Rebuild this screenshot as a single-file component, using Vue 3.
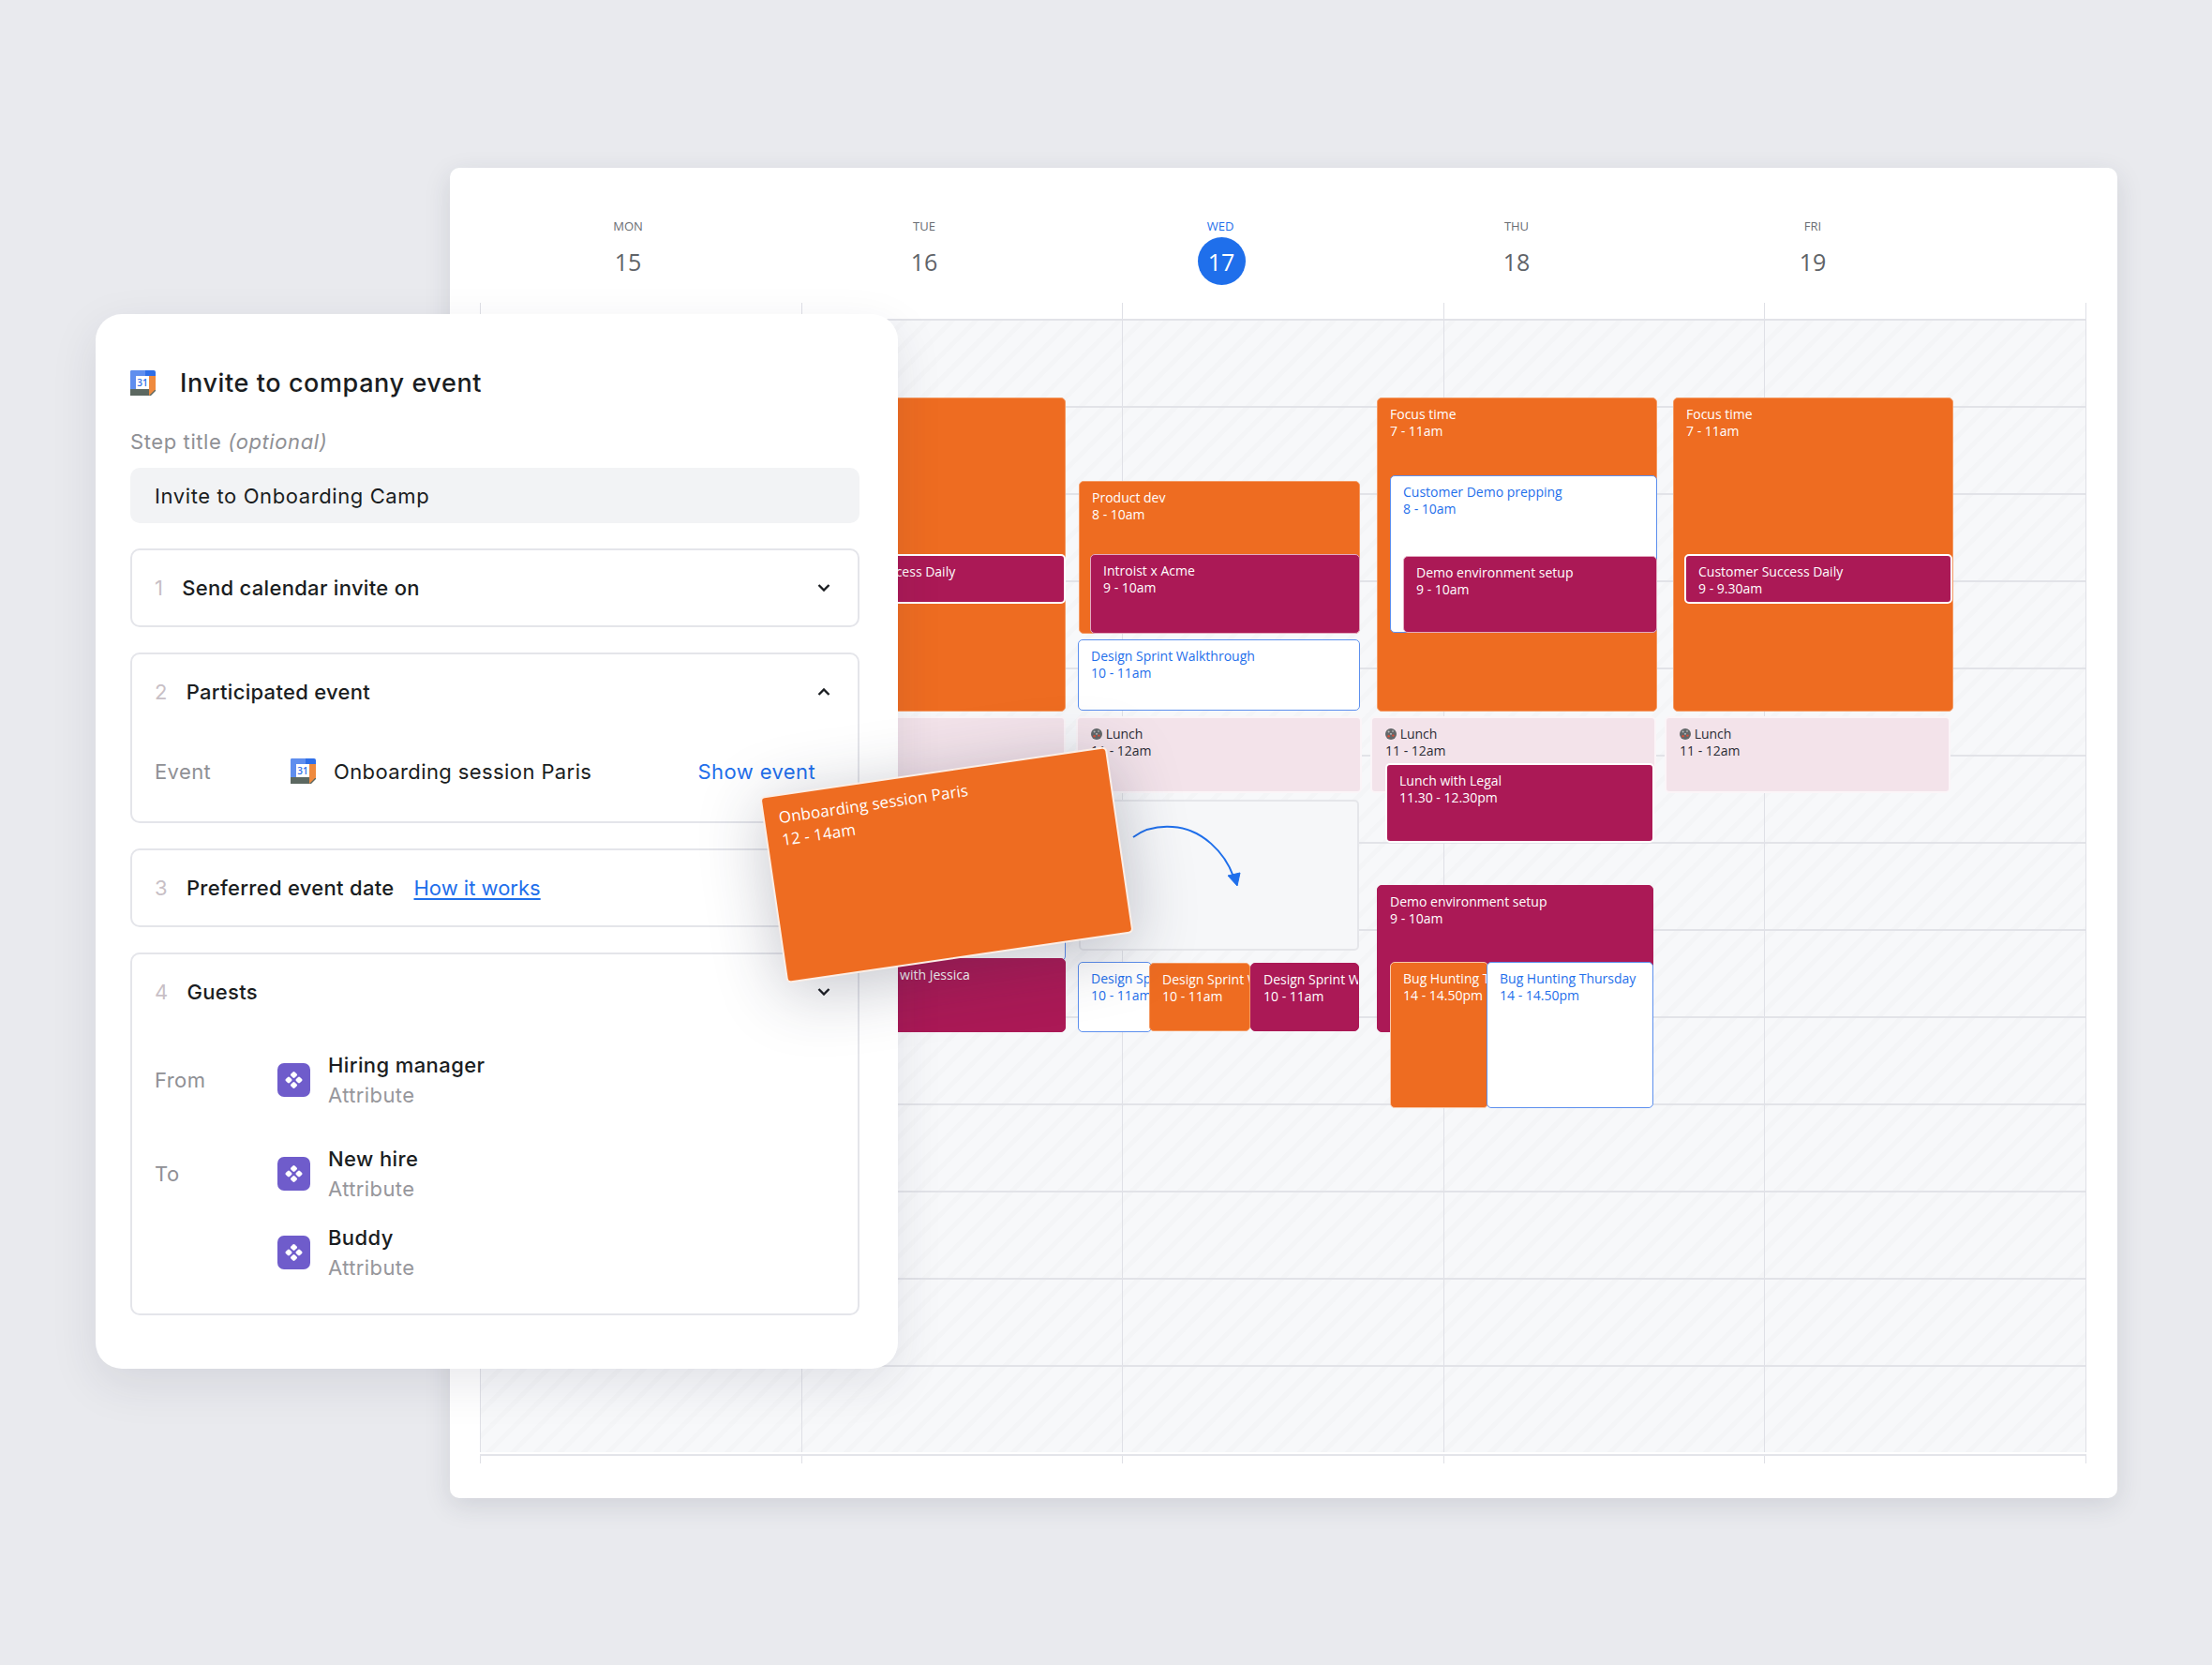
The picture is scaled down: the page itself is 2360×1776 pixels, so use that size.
<script setup>
const days = [
  { name: 'MON', date: 15 },
  { name: 'TUE', date: 16 },
  { name: 'WED', date: 17, today: true },
  { name: 'THU', date: 18 },
  { name: 'FRI', date: 19 },
]

const cells = Array.from({ length: 65 }, (_, i) => i)

// x, y, w, h are measured from the top left corner of the board
const events = [
  { kind: 'orange', title: 'Focus time', time: '7 - 11am', x: 325, y: 84, w: 300, h: 335 },
  { kind: 'magenta', title: 'Customer Success Daily', time: '9 - 9.30am', x: 338, y: 251, w: 287, h: 53, ring: true },
  { kind: 'pink', title: 'Lunch', time: '11 - 12am', x: 322, y: 424, w: 303, h: 82, lunch: true },
  { kind: 'white', title: '', time: '', x: 324, y: 513, w: 301, h: 172 },
  { kind: 'magenta', title: 'Onboarding call with Jessica', time: '', x: 327, y: 682, w: 298, h: 79 },

  { kind: 'orange', title: 'Product dev', time: '8 - 10am', x: 639, y: 173, w: 300, h: 163 },
  { kind: 'magenta', title: 'Introist x Acme', time: '9 - 10am', x: 651, y: 251, w: 288, h: 85, soft: true },
  { kind: 'white', title: 'Design Sprint Walkthrough', time: '10 - 11am', x: 638, y: 342, w: 301, h: 76 },
  { kind: 'pink', title: 'Lunch', time: '11 - 12am', x: 636, y: 424, w: 305, h: 82, lunch: true },
  { kind: 'slot', title: '', time: '', x: 639, y: 513, w: 299, h: 161 },
  { kind: 'white', title: 'Design Sprint Walkthrough', time: '10 - 11am', x: 638, y: 686, w: 79, h: 75 },
  { kind: 'orange', title: 'Design Sprint Walkthrough', time: '10 - 11am', x: 714, y: 687, w: 108, h: 73 },
  { kind: 'magenta', title: 'Design Sprint Walkthrough', time: '10 - 11am', x: 822, y: 687, w: 116, h: 73 },

  { kind: 'orange', title: 'Focus time', time: '7 - 11am', x: 957, y: 84, w: 299, h: 335 },
  { kind: 'white', title: 'Customer Demo prepping', time: '8 - 10am', x: 971, y: 167, w: 285, h: 168 },
  { kind: 'magenta', title: 'Demo environment setup', time: '9 - 10am', x: 985, y: 253, w: 271, h: 82, soft: true },
  { kind: 'pink', title: 'Lunch', time: '11 - 12am', x: 950, y: 424, w: 305, h: 82, lunch: true },
  { kind: 'magenta', title: 'Lunch with Legal', time: '11.30 - 12.30pm', x: 966, y: 474, w: 287, h: 85, ring: true },
  { kind: 'magenta', title: 'Demo environment setup', time: '9 - 10am', x: 957, y: 604, w: 295, h: 157 },
  { kind: 'orange', title: 'Bug Hunting Thursday', time: '14 - 14.50pm', x: 971, y: 686, w: 105, h: 156, ring: true },
  { kind: 'white', title: 'Bug Hunting Thursday', time: '14 - 14.50pm', x: 1074, y: 686, w: 178, h: 156 },

  { kind: 'orange', title: 'Focus time', time: '7 - 11am', x: 1273, y: 84, w: 299, h: 335 },
  { kind: 'magenta', title: 'Customer Success Daily', time: '9 - 9.30am', x: 1285, y: 251, w: 286, h: 53, ring: true },
  { kind: 'pink', title: 'Lunch', time: '11 - 12am', x: 1264, y: 424, w: 305, h: 82, lunch: true },
]

function box(e) {
  return { left: `${e.x}px`, top: `${e.y}px`, width: `${e.w}px`, height: `${e.h}px` }
}

const guests = [
  { label: 'From', people: ['Hiring manager'] },
  { label: 'To', people: ['New hire', 'Buddy'] },
]
</script>

<template>
  <div class="page">
    <section class="calendar">
      <div class="week-head">
        <div v-for="d in days" :key="d.name" class="day-head" :class="{ today: d.today }">
          <span class="day-name">{{ d.name }}</span>
          <span class="day-date">{{ d.date }}</span>
        </div>
      </div>
      <div class="ticks"><i v-for="d in days" :key="d.name"></i></div>

      <div class="board">
        <div v-for="c in cells" :key="c" class="cell"></div>

        <div
          v-for="(e, i) in events"
          :key="i"
          class="event"
          :class="[e.kind, { ring: e.ring, soft: e.soft }]"
          :style="box(e)"
        >
          <div v-if="e.title" class="event-title">
            <svg v-if="e.lunch" class="lunch-icon" viewBox="0 0 12 12">
              <circle cx="6" cy="6" r="6" fill="#63686a" />
              <circle cx="3.6" cy="3.4" r="1" fill="#b9bcbc" />
              <circle cx="8" cy="3" r="1" fill="#a4a8a8" />
              <circle cx="3.6" cy="8.2" r="1.2" fill="#d9503a" />
              <circle cx="8.4" cy="7.6" r="1.2" fill="#d9503a" />
              <circle cx="6" cy="5.8" r="0.9" fill="#c9cccc" />
            </svg>
            {{ e.title }}
          </div>
          <div v-if="e.time" class="event-time">{{ e.time }}</div>
        </div>

        <svg class="drop-arrow" viewBox="0 0 124 72" fill="none">
          <path d="M2 13 C 14 4 30 1 44 2 C 76 4 100 30 109 55" stroke="#1f6feb" stroke-width="2" />
          <path d="M103 54 L116 51 L113 65 Z" fill="#1f6feb" stroke="#1f6feb" stroke-linejoin="round" />
        </svg>
      </div>

      <div class="ticks bottom"><i v-for="d in days" :key="d.name"></i></div>
    </section>

    <aside class="panel">
      <header class="panel-head">
        <svg class="gcal" viewBox="0 0 27 27">
          <rect x="0" y="0" width="27" height="27" rx="2" fill="#2f6fe8" />
          <path d="M0 2 Q0 0 2 0 H16 V6 H6 V20 H0 Z" fill="#5f8eee" />
          <rect x="0" y="20" width="27" height="7" fill="#5c6861" />
          <rect x="20" y="6" width="7" height="15" fill="#ef8a3e" />
          <path d="M20 27 L27 20 L20 20 Z" fill="#ef8a3e" />
          <path d="M22 27 L27 22 L27 27 Z" fill="#fff" />
          <rect x="6" y="6" width="14" height="14" fill="#fff" />
          <text x="13" y="17" text-anchor="middle" class="gcal-num">31</text>
        </svg>
        <h1>Invite to company event</h1>
      </header>

      <p class="step-label">Step title <em>(optional)</em></p>
      <div class="step-input">Invite to Onboarding Camp</div>

      <div class="step">
        <div class="step-head">
          <span class="step-num">1</span>
          <span class="step-title">Send calendar invite on</span>
          <svg class="chevron" viewBox="0 0 14 8" fill="none"><path d="M1.5 1 L7 6.5 L12.5 1" /></svg>
        </div>
      </div>

      <div class="step">
        <div class="step-head">
          <span class="step-num">2</span>
          <span class="step-title">Participated event</span>
          <svg class="chevron" viewBox="0 0 14 8" fill="none"><path d="M1.5 7 L7 1.5 L12.5 7" /></svg>
        </div>
        <div class="event-row">
          <span class="row-label">Event</span>
          <svg class="gcal" viewBox="0 0 27 27">
            <rect x="0" y="0" width="27" height="27" rx="2" fill="#2f6fe8" />
            <path d="M0 2 Q0 0 2 0 H16 V6 H6 V20 H0 Z" fill="#5f8eee" />
            <rect x="0" y="20" width="27" height="7" fill="#5c6861" />
            <rect x="20" y="6" width="7" height="15" fill="#ef8a3e" />
            <path d="M20 27 L27 20 L20 20 Z" fill="#ef8a3e" />
            <path d="M22 27 L27 22 L27 27 Z" fill="#fff" />
            <rect x="6" y="6" width="14" height="14" fill="#fff" />
            <text x="13" y="17" text-anchor="middle" class="gcal-num">31</text>
          </svg>
          <span class="event-name">Onboarding session Paris</span>
          <a class="show-event">Show event</a>
        </div>
      </div>

      <div class="step">
        <div class="step-head">
          <span class="step-num">3</span>
          <span class="step-title">Preferred event date</span>
          <a class="how-link">How it works</a>
        </div>
      </div>

      <div class="step">
        <div class="step-head">
          <span class="step-num">4</span>
          <span class="step-title">Guests</span>
          <svg class="chevron" viewBox="0 0 14 8" fill="none"><path d="M1.5 1 L7 6.5 L12.5 1" /></svg>
        </div>
        <div class="guests">
          <div v-for="g in guests" :key="g.label" class="guest-group">
            <span class="row-label guest-label">{{ g.label }}</span>
            <div class="people">
              <div v-for="p in g.people" :key="p" class="person">
                <svg class="attr-icon" viewBox="0 0 35 36">
                  <rect width="35" height="36" rx="7" fill="#6f5ccb" />
                  <g fill="#fff">
                    <rect x="14.6" y="9.6" width="5.8" height="5.8" rx="1.4" transform="rotate(45 17.5 12.5)" />
                    <rect x="14.6" y="20.6" width="5.8" height="5.8" rx="1.4" transform="rotate(45 17.5 23.5)" />
                    <rect x="9.1" y="15.1" width="5.8" height="5.8" rx="1.4" transform="rotate(45 12 18)" />
                    <rect x="20.1" y="15.1" width="5.8" height="5.8" rx="1.4" transform="rotate(45 23 18)" />
                  </g>
                </svg>
                <div class="person-text">
                  <span class="person-name">{{ p }}</span>
                  <span class="person-attr">Attribute</span>
                </div>
              </div>
            </div>
          </div>
        </div>
      </div>
    </aside>

    <div class="dragged">
      <div class="dragged-title">Onboarding session Paris</div>
      <div class="dragged-time">12 - 14am</div>
    </div>
  </div>
</template>

<style>
html,
body {
  margin: 0;
  background: #e9eaee;
}
</style>

<style scoped>
.page {
  position: relative;
  width: 2360px;
  height: 1776px;
  padding: 179px 101px 0 480px;
  box-sizing: border-box;
  overflow: hidden;
  background: #e9eaee;
  font-family: 'Open Sans', 'Liberation Sans', sans-serif;
}

.calendar {
  height: 1419px;
  padding-left: 32px;
  padding-right: 33px;
  box-sizing: border-box;
  background: #fff;
  border-radius: 10px;
  box-shadow: 0 8px 28px rgba(40, 44, 70, 0.13);
}

.week-head {
  display: grid;
  grid-template-columns: repeat(5, 316px);
  height: 144px;
  box-sizing: border-box;
  padding-top: 53px;
}

.day-head {
  display: flex;
  flex-direction: column;
  align-items: center;
  color: #5f6368;
}

.day-name {
  font-size: 13px;
  line-height: 18px;
  color: #696d73;
}

.day-date {
  width: 51px;
  height: 51px;
  margin-top: 3px;
  border-radius: 50%;
  display: flex;
  align-items: center;
  justify-content: center;
  font-size: 25px;
}

.today .day-name {
  color: #1f6feb;
}

.today .day-date {
  margin-left: 2px;
  background: #1f6feb;
  color: #fff;
}

.ticks {
  display: grid;
  grid-template-columns: repeat(5, 1fr);
  height: 17px;
  border-right: 1px solid #dfe0e6;
}

.ticks.bottom {
  height: 8px;
  margin-top: 2px;
  border-top: 2px solid #e4e5ea;
}

.ticks i {
  border-left: 1px solid #dfe0e6;
}

.board {
  position: relative;
  display: grid;
  grid-template-columns: repeat(5, 1fr);
  grid-template-rows: repeat(13, 93px);
  border-right: 1px solid #dfe0e6;
  background: repeating-linear-gradient(135deg, #f7f8fa 0 13px, #f4f5f7 13px 18px);
}

.cell {
  border-top: 2px solid #e2e3e8;
  border-left: 1px solid #dfe0e6;
}

.event {
  position: absolute;
  box-sizing: border-box;
  padding: 8px 13px;
  overflow: hidden;
  white-space: nowrap;
  border-radius: 5px;
  font-size: 14px;
  line-height: 18px;
}

.event-title {
  font-weight: 500;
}

.orange {
  background: #ee6c21;
  border: 1px solid #f49a63;
  color: #fff;
}

.magenta {
  background: #ab1956;
  border: 1px solid #ab1956;
  color: #fff;
}

.white {
  background: #fff;
  border: 1.5px solid #5c8fee;
  color: #1f6feb;
}

.pink {
  padding-left: 14px;
  background: #f3e3ea;
  border: 2px solid #fbf5f8;
  color: #2c2c35;
}

.slot {
  background: #f6f7f9;
  border: 2px solid #e5e6ea;
}

.ring {
  border: 2px solid #fff;
}

.soft {
  border: 1.5px solid #e3abc0;
}

.orange.ring {
  border: 1.5px solid #f8c8aa;
}

.lunch-icon {
  width: 12px;
  height: 12px;
  vertical-align: -1px;
}

.drop-arrow {
  position: absolute;
  left: 695px;
  top: 540px;
  width: 124px;
  height: 72px;
}

.panel {
  position: absolute;
  left: 102px;
  top: 335px;
  width: 856px;
  height: 1125px;
  padding: 60px 41px 0 37px;
  box-sizing: border-box;
  background: #fff;
  border-radius: 28px;
  box-shadow: 0 16px 50px rgba(40, 44, 70, 0.1);
  font-family: Inter, 'Noto Sans', sans-serif;
  color: #1a1d21;
  letter-spacing: 0.4px;
}

.panel-head {
  display: flex;
  align-items: center;
  gap: 26px;
  height: 27px;
}

.panel-head h1 {
  margin: 0;
  font-size: 27px;
  font-weight: 500;
  letter-spacing: 0.6px;
}

.gcal {
  width: 27px;
  height: 27px;
  flex: none;
}

.gcal-num {
  font-family: 'Open Sans', sans-serif;
  font-size: 10px;
  font-weight: 600;
  fill: #2f6fe8;
  letter-spacing: 0;
}

.step-label {
  margin: 34px 0 0;
  font-size: 22px;
  line-height: 30px;
  letter-spacing: 0.6px;
  color: #8f9095;
}

.step-label em {
  font-style: italic;
}

.step-input {
  margin-top: 13px;
  height: 59px;
  padding-left: 26px;
  display: flex;
  align-items: center;
  background: #f2f3f5;
  border-radius: 10px;
  font-size: 22px;
  letter-spacing: 0.6px;
}

.step {
  margin-top: 27px;
  border: 2px solid #e4e5ea;
  border-radius: 10px;
  padding: 0 24px;
}

.step-head {
  display: flex;
  align-items: center;
  height: 80px;
  font-size: 22px;
  font-weight: 500;
  letter-spacing: 0.3px;
}

.step-num {
  margin-right: 20px;
  font-weight: 400;
  color: #c8bfc6;
}

.chevron {
  width: 14px;
  height: 8px;
  margin-left: auto;
  margin-right: 5px;
  stroke: #1a1d21;
  stroke-width: 2.4;
}

.how-link {
  margin-left: 21px;
  font-weight: 400;
  letter-spacing: 0;
  color: #1f6feb;
  text-decoration: underline;
  text-underline-offset: 3px;
}

.row-label {
  font-size: 22px;
  color: #8f9095;
}

.event-row {
  display: flex;
  align-items: center;
  height: 27px;
  margin-top: 31px;
  margin-bottom: 40px;
}

.event-row .row-label {
  width: 145px;
}

.event-name {
  margin-left: 19px;
  font-size: 22px;
}

.show-event {
  margin-left: auto;
  margin-right: 21px;
  font-size: 22px;
  color: #1f6feb;
}

.guests {
  display: flex;
  flex-direction: column;
  gap: 36px;
  margin-top: 22px;
  padding-bottom: 33px;
}

.guest-group {
  display: flex;
}

.guest-label {
  width: 131px;
  height: 64px;
  line-height: 64px;
}

.people {
  display: flex;
  flex-direction: column;
  gap: 20px;
}

.person {
  display: flex;
  align-items: center;
  gap: 19px;
}

.attr-icon {
  width: 35px;
  height: 36px;
  flex: none;
}

.person-text {
  display: flex;
  flex-direction: column;
  font-size: 22px;
  line-height: 32px;
}

.person-name {
  font-weight: 500;
}

.person-attr {
  color: #97979c;
}

.dragged {
  position: absolute;
  left: 823px;
  top: 822px;
  width: 374px;
  height: 201px;
  padding: 11px 15px;
  box-sizing: border-box;
  transform: rotate(-8.3deg);
  background: #ee6c21;
  border: 2px solid #fbeee6;
  border-radius: 5px;
  box-shadow: 0 12px 70px rgba(40, 44, 70, 0.28);
  color: #fff;
  font-size: 17px;
  line-height: 24px;
  letter-spacing: 0.1px;
}

.dragged-title {
  font-weight: 500;
}
</style>
